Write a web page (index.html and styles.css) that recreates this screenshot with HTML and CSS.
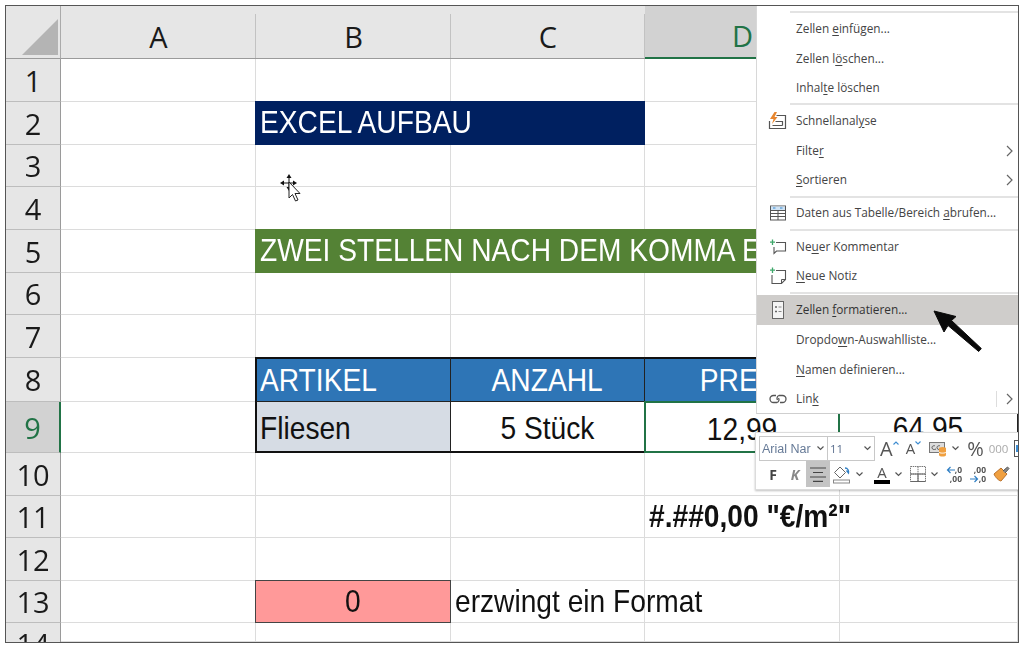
FILE: index.html
```html
<!DOCTYPE html>
<html lang="de">
<head>
<meta charset="utf-8">
<title>Excel Aufbau</title>
<link rel="stylesheet" href="styles.css">
</head>
<body>
<main class="sheet">
  <div class="grid">
    <div class="corner"><svg width="36" height="36" viewBox="0 0 36 36"><path d="M0 36 36 36 36 0Z" fill="#b4b4b4"/></svg></div>
    <div class="ch">A</div><div class="ch">B</div><div class="ch">C</div><div class="ch ch-sel">D</div><div class="ch">E</div>

    <div class="rh">1</div><div class="c"></div><div class="c"></div><div class="c"></div><div class="c"></div><div class="c"></div>
    <div class="rh">2</div><div class="c"></div><div class="c fill navy"><span class="nw nw-l">EXCEL AUFBAU</span></div><div class="c fill navy"></div><div class="c"></div><div class="c"></div>
    <div class="rh">3</div><div class="c"></div><div class="c"></div><div class="c"></div><div class="c"></div><div class="c"></div>
    <div class="rh">4</div><div class="c"></div><div class="c"></div><div class="c"></div><div class="c"></div><div class="c"></div>
    <div class="rh">5</div><div class="c"></div><div class="c fill green"><span class="nw nw-l">ZWEI STELLEN NACH DEM KOMMA EINGEBEN</span></div><div class="c fill green"></div><div class="c fill green"></div><div class="c fill green"></div>
    <div class="rh">6</div><div class="c"></div><div class="c"></div><div class="c"></div><div class="c"></div><div class="c"></div>
    <div class="rh">7</div><div class="c"></div><div class="c"></div><div class="c"></div><div class="c"></div><div class="c"></div>
    <div class="rh">8</div><div class="c"></div><div class="c tb th t-top t-left"><span class="nw nw-l">ARTIKEL</span></div><div class="c tb th t-top mid"><span class="nw">ANZAHL</span></div><div class="c tb th t-top mid"><span class="nw">PREIS</span></div><div class="c tb th t-top mid"><span class="nw">SUMME</span></div>
    <div class="rh rh-sel">9</div><div class="c"></div><div class="c tb fl t-bottom t-left low"><span class="nw nw-l">Fliesen</span></div><div class="c tb t-bottom mid low"><span class="nw">5 Stück</span></div><div class="c selected mid low"><span class="nw">12,99</span></div><div class="c tb t-bottom mid low"><span class="nw">64,95</span></div>
    <div class="rh">10</div><div class="c"></div><div class="c"></div><div class="c"></div><div class="c"></div><div class="c"></div>
    <div class="rh">11</div><div class="c"></div><div class="c"></div><div class="c"></div><div class="c fmt"><span class="nw nw-l fmt-text">#.##0,00 "€/m²"</span></div><div class="c"></div>
    <div class="rh">12</div><div class="c"></div><div class="c"></div><div class="c"></div><div class="c"></div><div class="c"></div>
    <div class="rh">13</div><div class="c"></div><div class="c pink mid"><span class="nw">0</span></div><div class="c note"><span class="nw nw-l">erzwingt ein Format</span></div><div class="c"></div><div class="c"></div>
    <div class="rh rh-cut">14</div><div class="c"></div><div class="c"></div><div class="c"></div><div class="c"></div><div class="c"></div>
  </div>

  <svg class="cursor" width="24" height="32" viewBox="0 0 24 32">
    <g fill="#111">
      <path d="M9 0 11.500 4H6.500Z"/><path d="M0 9 4 6.500V11.500Z"/><path d="M17 9 13 6.500V11.500Z"/><path d="M9 17 6.500 13H11.500Z"/>
      <rect x="8.500" y="3" width="1" height="12"/><rect x="3" y="8.500" width="12" height="1"/>
    </g>
    <path d="M9 8V24L12.500 20.500 15.500 27 18 26 15 19.500H20Z" fill="#fff" stroke="#222" stroke-width="1"/>
  </svg>

  <nav class="menu">
    <div class="sep sep-first"></div>
    <div class="item"><span class="ic"></span><span>Zellen <u>e</u>infügen...</span></div>
    <div class="item"><span class="ic"></span><span>Zellen l<u>ö</u>schen...</span></div>
    <div class="item"><span class="ic"></span><span>Inhal<u>t</u>e löschen</span></div>
    <div class="sep sep-a"></div>
    <div class="item"><span class="ic"><svg width="19" height="18" viewBox="0 0 19 18"><path d="M6.500 0 2 7H5.500L4 12 9.500 5H6.500L9 0Z" fill="#e8862e"/><path d="M8.500 3.500H17.500V16.500H1.500V9" fill="none" stroke="#555" stroke-width="1.200"/><path d="M4.500 13.500H14.500M7.500 9.500H14.500V13.500" fill="none" stroke="#555" stroke-width="1.200"/></svg></span><span>Schnellanal<u>y</u>se</span></div>
    <div class="item"><span class="ic"></span><span>Filte<u>r</u></span><svg class="chev" width="7" height="12" viewBox="0 0 7 12"><path d="M1 1 6 6 1 11" fill="none" stroke="#666" stroke-width="1.200"/></svg></div>
    <div class="item"><span class="ic"></span><span><u>S</u>ortieren</span><svg class="chev" width="7" height="12" viewBox="0 0 7 12"><path d="M1 1 6 6 1 11" fill="none" stroke="#666" stroke-width="1.200"/></svg></div>
    <div class="sep sep-b"></div>
    <div class="item"><span class="ic"><svg width="18" height="16" viewBox="0 0 18 16"><rect x="1.500" y="1" width="15" height="14" fill="#fff" stroke="#555"/><rect x="2" y="1.500" width="14" height="3.500" fill="#cfe3f5"/><path d="M1.500 5.500H16.500M1.500 8.500H16.500M1.500 11.500H16.500M9 5.500V15" stroke="#555" fill="none"/><path d="M4 3H6.500M11 3H13.500" stroke="#3b8bd0"/></svg></span><span>Daten aus Tabelle/Bereich <u>a</u>brufen...</span></div>
    <div class="sep sep-c"></div>
    <div class="item"><span class="ic"><svg width="18" height="18" viewBox="0 0 18 18"><path d="M7 4.500H16.500V13H7.500L5 15.500V9" fill="none" stroke="#555" stroke-width="1.100"/><path d="M3.500 1.500V7M1 4.200H6" stroke="#3ea76a" stroke-width="1.300"/></svg></span><span>Ne<u>u</u>er Kommentar</span></div>
    <div class="item"><span class="ic"><svg width="18" height="18" viewBox="0 0 18 18"><path d="M7 3.500H16.500V12.500L12.500 16.500H3V8" fill="none" stroke="#555" stroke-width="1.100"/><path d="M16.500 12.500H12.500V16.500" fill="none" stroke="#555"/><path d="M3.500 .500V6M1 3.200H6" stroke="#3ea76a" stroke-width="1.300"/></svg></span><span><u>N</u>eue Notiz</span></div>
    <div class="sep sep-c"></div>
    <div class="item hl"><span class="ic"><svg width="12" height="18" viewBox="0 0 12 18"><rect x=".5" y=".5" width="11" height="17" fill="#f4f4f4" stroke="#666"/><path d="M3 6H5M3 10.500H5" stroke="#666" stroke-width="1.500"/><path d="M6.500 6H9.500M6.500 10.500H9.500" stroke="#888"/></svg></span><span>Zellen <u>f</u>ormatieren...</span></div>
    <div class="item"><span class="ic"></span><span>Dropdo<u>w</u>n-Auswahlliste...</span></div>
    <div class="item"><span class="ic"></span><span><u>N</u>amen definieren...</span></div>
    <div class="item"><span class="ic"><svg width="18" height="12" viewBox="0 0 18 12"><path d="M7 2.500H4.500A3.500 3.500 0 0 0 4.500 9.500H8A3 3 0 0 0 9.500 5" fill="none" stroke="#555" stroke-width="1.300"/><path d="M11 9.500H13.500A3.500 3.500 0 0 0 13.500 2.500H10A3 3 0 0 0 8.500 7" fill="none" stroke="#555" stroke-width="1.300"/></svg></span><span>Lin<u>k</u></span><i class="split"></i><svg class="chev" width="7" height="12" viewBox="0 0 7 12"><path d="M1 1 6 6 1 11" fill="none" stroke="#666" stroke-width="1.200"/></svg></div>
  </nav>

  <div class="mini">
    <div class="mini-row">
      <div class="box box-font"><span>Arial Nar</span><svg class="dd" width="7" height="5" viewBox="0 0 7 5"><path d="M.5 .5 3.500 3.500 6.500 .5" fill="none" stroke="#555" stroke-width="1.200"/></svg></div>
      <div class="box box-size"><span>11</span><svg class="dd" width="7" height="5" viewBox="0 0 7 5"><path d="M.5 .5 3.500 3.500 6.500 .5" fill="none" stroke="#555" stroke-width="1.200"/></svg></div>
      <span class="grow-a">A</span><svg class="up" width="6" height="4" viewBox="0 0 6 4"><path d="M.5 3.500 3 1 5.500 3.500" fill="none" stroke="#3b8bd0" stroke-width="1.100"/></svg>
      <span class="shrink-a">A</span><svg class="up" width="6" height="4" viewBox="0 0 6 4"><path d="M.5 .5 3 3 5.500 .5" fill="none" stroke="#3b8bd0" stroke-width="1.100"/></svg>
      <svg class="t-cmt" width="18" height="16" viewBox="0 0 18 16"><rect x=".5" y="1.500" width="15" height="10" fill="#ddd" stroke="#777"/><path d="M3 6.500C3 4.500 6 4.500 6 5M7 8C5 9 3 8.500 3 6.500M8 6.500C8 4.500 11 4.500 11 5M12 8C10 9 8 8.500 8 6.500" fill="none" stroke="#555"/><ellipse cx="13.500" cy="7.500" rx="3.500" ry="1.500" fill="#f0a040"/><path d="M10 7.500V14C10 16 17 16 17 14V7.500" fill="#f0a040"/><path d="M10 11C10 12.500 17 12.500 17 11" fill="none" stroke="#fff"/></svg>
      <svg class="dd dd-free" width="7" height="5" viewBox="0 0 7 5"><path d="M.5 .5 3.500 3.500 6.500 .5" fill="none" stroke="#555" stroke-width="1.200"/></svg>
      <span class="pct">%</span>
      <span class="thou">000</span>
      <svg class="t-wrap" width="12" height="18" viewBox="0 0 12 18"><rect x=".5" y=".5" width="16" height="16" fill="#fff" stroke="#555"/><rect x="2" y="5" width="10" height="7" fill="#3b8bd0"/></svg>
    </div>
    <div class="mini-row mini-row2">
      <b class="t-f">F</b><i class="t-k">K</i>
      <span class="t-align"><svg width="16" height="15" viewBox="0 0 16 15"><path d="M0 1H16M3 5.500H13M0 10H16M3 14.300H13" stroke="#444" stroke-width="1.200"/></svg></span>
      <svg class="t-fill" width="18" height="19" viewBox="0 0 18 19"><path d="M7 2 1.500 7.500 7 13 12.500 7.500Z" fill="#fff" stroke="#666"/><path d="M12 3C15 3 16 6 15.500 8L13.500 5.500" fill="none" stroke="#2f7fc4" stroke-width="1.300"/><rect x=".5" y="15" width="16" height="3" fill="#fff" stroke="#888"/></svg>
      <svg class="dd dd-free" width="7" height="5" viewBox="0 0 7 5"><path d="M.5 .5 3.500 3.500 6.500 .5" fill="none" stroke="#555" stroke-width="1.200"/></svg>
      <span class="t-color">A</span>
      <svg class="dd dd-free" width="7" height="5" viewBox="0 0 7 5"><path d="M.5 .5 3.500 3.500 6.500 .5" fill="none" stroke="#555" stroke-width="1.200"/></svg>
      <svg class="t-border" width="16" height="16" viewBox="0 0 16 16"><path d="M.5 .5H15.500V15.500H.5ZM8 .5V15.500M.5 8H15.500" fill="none" stroke="#777" stroke-dasharray="1.500 .7"/><path d="M.5 15.500H15.500M8 8V15.500M.5 8H15.500" fill="none" stroke="#666"/></svg>
      <svg class="dd dd-free" width="7" height="5" viewBox="0 0 7 5"><path d="M.5 .5 3.500 3.500 6.500 .5" fill="none" stroke="#555" stroke-width="1.200"/></svg>
      <span class="dec dec-a"><span class="dec-top"><svg width="9" height="8" viewBox="0 0 9 8"><path d="M9 4H1.500M4.500 1 1.500 4 4.500 7" fill="none" stroke="#2f7fc4" stroke-width="1.200"/></svg>,0</span><span>,00</span></span>
      <span class="dec dec-b"><span class="dec-top">,00</span><span class="dec-top"><svg width="9" height="8" viewBox="0 0 9 8"><path d="M0 4H7.500M4.500 1 7.500 4 4.500 7" fill="none" stroke="#2f7fc4" stroke-width="1.200"/></svg>,0</span></span>
      <svg class="t-brush" width="17" height="17" viewBox="0 0 17 17"><path d="M1 8 8 2 14 8 8 15C6 15 2 11 1 8Z" fill="#f0a040" stroke="#b9702a"/><path d="M10 5 14.500 1 16 2.500 12 7" fill="#888" stroke="#555"/></svg>
    </div>
  </div>

  <svg class="pointer" width="58" height="50" viewBox="0 0 58 50"><path d="M7 7 29 12.500 24.500 16.500 54.300 44.500 51.700 47.500 21 21.500 17 28Z" fill="#0a0a0a" stroke="#0a0a0a" stroke-linejoin="round"/></svg>
</main>
</body>
</html>
```
FILE: styles.css
```css
html, body { margin: 0; padding: 0; background: #fff; }
body { padding: 5px; height: 647px; box-sizing: border-box; overflow: hidden; }

.sheet {
  position: relative;
  width: 1014px;
  height: 638px;
  box-sizing: border-box;
  border: 1px solid #555;
  overflow: hidden;
  font-family: "Liberation Sans", sans-serif;
  color: #111;
  filter: blur(.35px);
}

.grid {
  display: grid;
  grid-template-columns: 55px 195px 195px 194px 195px 178px;
  grid-template-rows: 53px 43px 43px 42px 43px 43px 42px 43px 44px 51px 43px 42px 43px 42px 19px;
}

.corner { background: #e6e6e6; border-right: 1px solid #aaa; border-bottom: 1px solid #9a9a9a; display: flex; justify-content: flex-end; align-items: flex-end; padding: 0 2px 3px 0; box-sizing: border-box; }
.ch {
  display: flex; align-items: center; justify-content: center;
  padding-top: 8px; box-sizing: border-box;
  background: #e6e6e6;
  border-bottom: 1px solid #9a9a9a;
  font: 29px/1 "Open Sans", sans-serif;
  color: #1a1a1a;
  position: relative;
}
.ch::after { content: ""; position: absolute; right: 0; top: 8px; bottom: 0; width: 1px; background: #c2c2c2; }
.ch-sel { background: #d2d2d2; color: #217346; border-bottom: 2px solid #217346; }

.rh {
  display: flex; align-items: center; justify-content: center;
  background: #e6e6e6; box-sizing: border-box;
  border-right: 1px solid #9a9a9a; border-bottom: 1px solid #bdbdbd;
  font: 29px/1 "Open Sans", sans-serif;
  color: #1a1a1a;
  overflow: hidden;
}
.rh-sel { background: #d2d2d2; color: #217346; border-right: 2px solid #217346; }
.rh-cut { align-items: flex-start; padding-top: 6px; border-bottom: 0; }

.c {
  display: flex; align-items: center; box-sizing: border-box;
  border-right: 1px solid #dcdcdc; border-bottom: 1px solid #dcdcdc;
  background: #fff;
  font-size: 32px; white-space: nowrap;
  padding-left: 5px; min-width: 0;
}
.nw { display: inline-block; flex: none; transform: scaleX(.88); transform-origin: center; }
.nw-l { transform-origin: left center; }
.mid { justify-content: center; padding-left: 0; }
.low { padding-top: 4px; }
.fill { margin: -1px 0 0 -1px; padding-left: 5px; }
.navy { background: #002060; color: #fff; border-color: #002060; }
.green { background: #548235; color: #fff; border-color: #548235; }
.tb { margin: -1px 0 0 -1px; border: 1px solid #222; z-index: 1; }
.th { background: #2e75b6; color: #fff; }
.fl { background: #d6dce4; }
.t-top { border-top-width: 2px; border-top-color: #111; }
.t-left { border-left-width: 2px; border-left-color: #111; padding-left: 3px; }
.t-bottom { border-bottom-width: 2px; border-bottom-color: #111; }
.selected { margin: -1px 0 0 -1px; border: 2px solid #217346; z-index: 2; }
.fmt { padding-left: 4px; }
.fmt-text { font-weight: bold; }
.pink { background: #ff9999; margin: -1px 0 0 -1px; border: 1px solid #444; z-index: 1; }
.note { padding-left: 4px; }

.cursor { position: absolute; left: 274px; top: 168px; z-index: 3; }
.pointer { position: absolute; left: 921px; top: 298px; z-index: 6; }

.menu {
  position: absolute; left: 750px; top: 0; width: 262px; height: 408px; z-index: 5;
  background: #fff; box-sizing: border-box;
  border-left: 1px solid #d8d8d8; border-bottom: 1px solid #cfcfcf;
  display: flex; flex-direction: column;
  font: 11.8px/1 "Open Sans", sans-serif;
  color: #444;
  padding-top: 5px;
}
.sep { height: 2px; margin-left: 33px; background: #e3e3e3; flex: none; }
.sep-first { margin-bottom: 1px; }
.sep-a { margin-bottom: 1px; }
.sep-b { margin-top: 1px; }
.sep-c { margin-top: 1px; margin-bottom: 1px; }
.item { height: 29.700px; display: flex; align-items: center; flex: none; }
.hl { background: #cfcdcb; color: #333; }
.ic { width: 39px; flex: none; display: flex; justify-content: center; padding-left: 2px; box-sizing: border-box; }
.chev { margin-left: auto; margin-right: 5px; }
.split { margin-left: auto; width: 1px; height: 16px; background: #ddd; }
.split + .chev { margin-left: 9px; }
u { text-underline-offset: 2px; }

.mini {
  position: absolute; left: 749px; top: 426px; width: 280px; height: 58px; z-index: 5;
  background: #fff; box-sizing: border-box;
  border: 1px solid #dcdcdc; box-shadow: 0 1px 2px rgba(0,0,0,.25);
  padding: 3px 0 0 3px;
  font-family: "Open Sans", sans-serif; color: #555;
}
.mini-row { display: flex; align-items: center; height: 25px; }
.mini-row2 { height: 26px; }
.box { height: 25px; box-sizing: border-box; border: 1px solid #c8c8c8; display: flex; align-items: center; font-size: 11.500px; color: #5b6f8f; padding-left: 2px; }
.box span { flex: 1; white-space: nowrap; overflow: hidden; }
.box-font { width: 69px; font-family: "Liberation Sans", sans-serif; font-size: 12.500px; color: #667a97; }
.box-size { width: 48px; margin-left: -1px; }
.dd { margin-right: 3px; flex: none; }
.grow-a { font-size: 20px; margin-left: 5px; line-height: 1; color: #555; }
.shrink-a { font-size: 15px; margin-left: 7px; line-height: 1; color: #555; }
.up { align-self: flex-start; margin-top: 5px; }
.t-cmt { margin-left: 8px; }
.dd-free { margin-left: 5px; margin-right: 0; }
.pct { font-size: 20px; margin-left: 8px; line-height: 1; }
.thou { font-size: 11.500px; margin-left: 5px; color: #aaa; }
.t-wrap { margin-left: 6px; }

.t-f { width: 24px; margin-left: 2px; text-align: center; font-size: 14px; color: #444; }
.t-k { width: 20px; text-align: center; font-size: 14px; color: #888; font-weight: 700; }
.t-align { width: 24px; height: 26px; background: #c4c4c4; margin-left: 1px; display: flex; align-items: center; justify-content: center; }
.t-fill { margin-left: 3px; }
.t-color { width: 16px; margin-left: 11px; font-size: 15px; line-height: 16px; text-align: center; border-bottom: 4px solid #000; color: #555; }
.t-border { margin-left: 8px; }
.dec { margin-left: 6px; width: 18px; display: flex; flex-direction: column; font-size: 8.500px; line-height: 9px; font-weight: 700; color: #555; align-items: flex-end; }
.dec-top { display: flex; align-items: center; }
.t-brush { margin-left: 7px; }
```
